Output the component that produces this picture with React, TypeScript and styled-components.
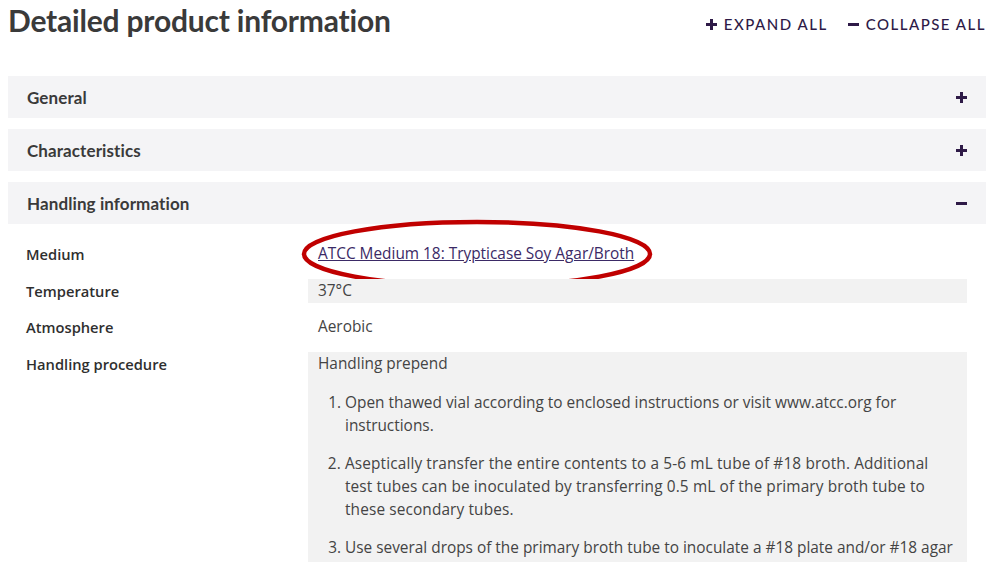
import styled, { createGlobalStyle } from "styled-components";

const GlobalStyle = createGlobalStyle`
    body {
        margin: 0;
        background: #fff;
        font-family: "Open Sans", "Noto Sans", sans-serif;
        color: #333;
    }
`;

type section = {
    title: string,
    open: boolean
}

const sections: section[] = [
    { title: "General", open: false },
    { title: "Characteristics", open: false },
    { title: "Handling information", open: true },
];

const steps = [
    "Open thawed vial according to enclosed instructions or visit www.atcc.org for instructions.",
    "Aseptically transfer the entire contents to a 5-6 mL tube of #18 broth. Additional test tubes can be inoculated by transferring 0.5 mL of the primary broth tube to these secondary tubes.",
    "Use several drops of the primary broth tube to inoculate a #18 plate and/or #18 agar slant.",
];

const Sign = ({ minus }: { minus?: boolean }) => (
    <svg width="11" height="11" viewBox="0 0 11 11">
        <rect x="0" y="4" width="11" height="3" fill="#2e1a47" />
        {!minus && <rect x="4" y="0" width="3" height="11" fill="#2e1a47" />}
    </svg>
);

const HandlingTable = () => (
    <Table>
        <Label>Medium</Label>
        <Value>
            <a href="#">ATCC Medium 18: Trypticase Soy Agar/Broth</a>
            <Circle viewBox="0 0 352 70">
                <ellipse cx="176" cy="35" rx="173" ry="32" fill="none" stroke="#c00000" strokeWidth="4.5" />
            </Circle>
        </Value>
        <Label>Temperature</Label>
        <Value $shaded>37°C</Value>
        <Label>Atmosphere</Label>
        <Value>Aerobic</Value>
        <Label>Handling procedure</Label>
        <Value $shaded>
            Handling prepend
            <Steps>
                {steps.map((s) => (
                    <li key={s}>{s}</li>
                ))}
            </Steps>
        </Value>
    </Table>
);

const App = () => {
    return (
        <>
            <GlobalStyle />
            <Page>
                <Header>
                    <h1>Detailed product information</h1>
                    <div className="actions">
                        <span><Sign /> Expand all</span>
                        <span><Sign minus /> Collapse all</span>
                    </div>
                </Header>

                {sections.map((s) => (
                    <Section key={s.title}>
                        <Bar>
                            <span>{s.title}</span>
                            <Sign minus={s.open} />
                        </Bar>
                        {s.open && <HandlingTable />}
                    </Section>
                ))}
            </Page>
        </>
    );
};

const Page = styled.div`
    padding: 0 14px 0 8px;
    height: 562px;
    overflow: hidden;
`;

const Header = styled.div`
    display: flex;
    justify-content: space-between;
    align-items: flex-start;
    height: 76px;

    & h1 {
        margin: 0;
        padding-top: 1px;
        font-family: "Lato", sans-serif;
        font-size: 30px;
        font-weight: 700;
        line-height: 38px;
        color: #3a3a3a;
        letter-spacing: -0.2px;
    }

    & .actions {
        display: flex;
        gap: 20px;
        padding-top: 15px;

        & span {
            display: flex;
            align-items: center;
            gap: 7px;
            font-family: "Lato", sans-serif;
            font-size: 15px;
            font-weight: 500;
            letter-spacing: 1.5px;
            text-transform: uppercase;
            color: #2e1a47;
        }
    }
`;

const Section = styled.div`
    margin-bottom: 11px;
`;

const Bar = styled.div`
    display: flex;
    justify-content: space-between;
    align-items: center;
    height: 42px;
    padding: 0 19px 0 19px;
    background-color: #f4f4f6;

    & span {
        font-family: "Lato", sans-serif;
        font-size: 17px;
        font-weight: 700;
        color: #3a3a3a;
        letter-spacing: 0.1px;
    }
`;

const Table = styled.div`
    display: grid;
    grid-template-columns: 282px 1fr;
    row-gap: 12.5px;
    align-items: start;
    padding: 18px 19px 0 18px;
`;

const Label = styled.div`
    font-size: 14.7px;
    font-weight: 600;
    line-height: 24px;
    color: #2f2f2f;
`;

const Value = styled.div<{ $shaded?: boolean }>`
    position: relative;
    padding-left: 10px;
    font-size: 15.4px;
    line-height: 24px;
    color: #444;
    background-color: ${(p) => (p.$shaded ? "#f2f2f2" : "transparent")};

    & a {
        color: #3b2a66;
        text-decoration: underline;
    }
`;

const Circle = styled.svg`
    position: absolute;
    left: -7px;
    top: -23px;
    display: block;
    width: 352px;
    height: 70px;
    overflow: visible;
    pointer-events: none;
`;

const Steps = styled.ol`
    margin: 15px 0 0 0;
    padding-left: 27px;
    padding-right: 11px;
    font-size: 15.4px;
    line-height: 23px;

    & li {
        margin-bottom: 15px;
    }

    & li:nth-child(2) {
        letter-spacing: 0.12px;
    }
`;

export default App;
